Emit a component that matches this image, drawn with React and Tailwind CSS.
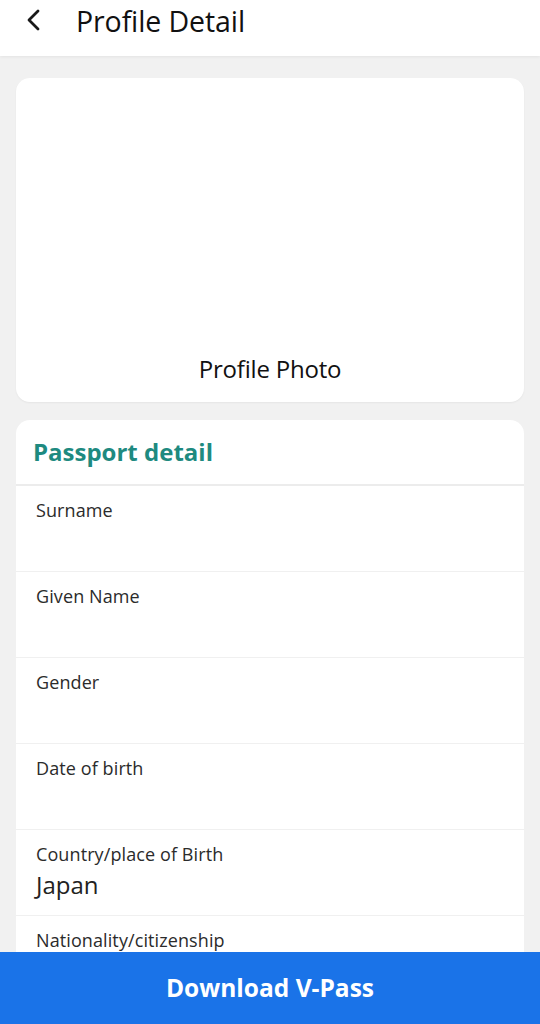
import React from 'react';

const fields = [
  { label: 'Surname', value: '' },
  { label: 'Given Name', value: '' },
  { label: 'Gender', value: '' },
  { label: 'Date of birth', value: '' },
  { label: 'Country/place of Birth', value: 'Japan' },
  { label: 'Nationality/citizenship', value: '' },
];

const App = () => {
  return (
    <div
      className="relative w-[540px] h-[1024px] overflow-hidden bg-[#f1f1f1]"
      style={{ fontFamily: '"Open Sans", Roboto, sans-serif' }}
    >
      {/* Header */}
      <div className="h-[56px] bg-white flex items-center shadow-[0_1px_3px_rgba(0,0,0,0.06)]">
        <svg width="24" height="24" viewBox="0 0 24 24" className="ml-[22px] mb-[16px]" fill="none" stroke="#1a1a1a" strokeWidth="2.8" strokeLinecap="round" strokeLinejoin="round">
          <path d="M16 3 L7 12 L16 21" />
        </svg>
        <h1 className="ml-[30px] mb-[14px] text-[28.5px] text-[#111] leading-none tracking-[-0.1px]">Profile Detail</h1>
      </div>

      <div className="px-4 pt-[22px] flex flex-col gap-[18px]">
        {/* Profile photo card */}
        <div className="h-[324px] bg-white rounded-[14px] flex flex-col justify-end items-center pb-[15px] shadow-[0_1px_2px_rgba(0,0,0,0.05)]">
          <span className="text-[24px] font-medium text-[#111] tracking-[-0.2px]">Profile Photo</span>
        </div>

        {/* Passport detail card */}
        <div className="bg-white rounded-t-[14px]">
          <div className="h-[66px] flex items-center px-[17px] border-b-2 border-[#ececec]">
            <h2 className="text-[24px] font-bold text-[#1e8a80]">Passport detail</h2>
          </div>
          {fields.map((f, i) => (
            <div key={i} className="h-[86px] px-5 pt-[12px] border-b border-[#f0f0f0]">
              <p className="text-[18px] text-[#2b2b2b] leading-[25px] tracking-[0.1px]">{f.label}</p>
              {f.value && <p className="text-[24px] text-[#222] leading-[32px] mt-[2px]">{f.value}</p>}
            </div>
          ))}
        </div>
      </div>

      {/* Bottom button */}
      <button className="absolute left-0 bottom-0 w-full h-[72px] bg-[#1a73e8] text-white text-[24.5px] font-bold flex items-center justify-center">
        Download V-Pass
      </button>
    </div>
  );
};

export default App;
